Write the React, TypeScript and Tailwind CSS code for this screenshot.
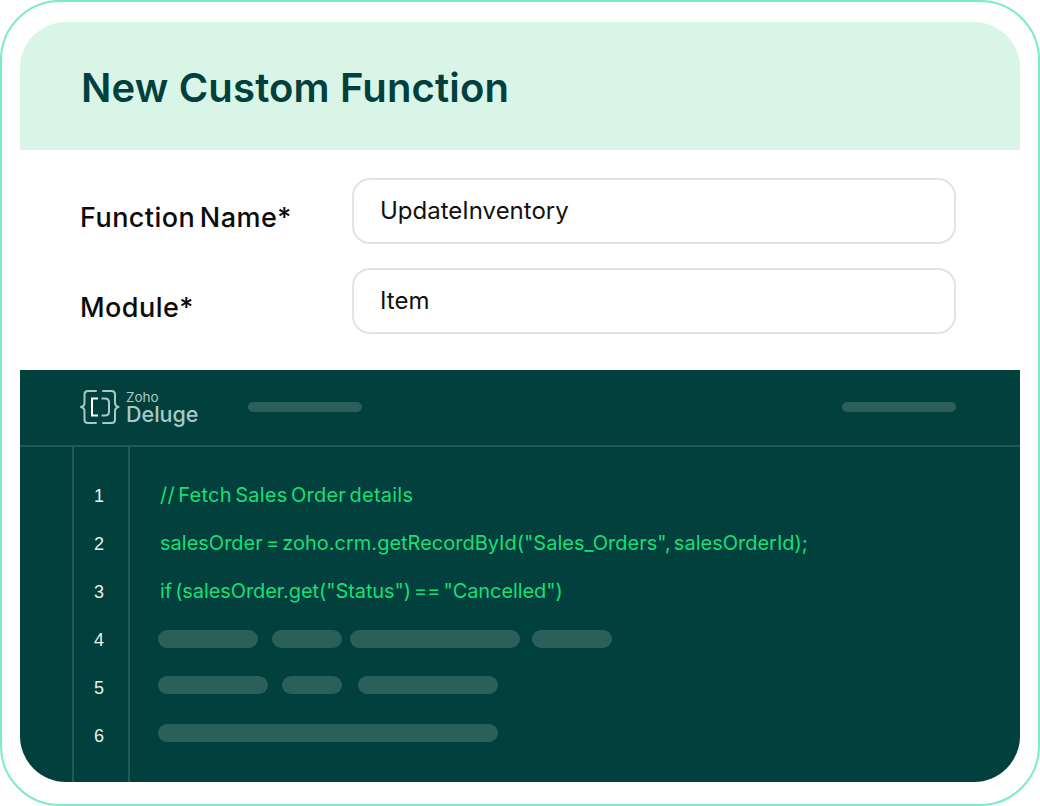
import React from 'react';

const sans = 'font-["Inter",sans-serif]';

// widths of the placeholder bars on the unreadable code lines
const skeletonLines: { n: number; row: string; bars: { w: string; gap: string }[] }[] = [
  {
    n: 4,
    row: '-mt-[1px]',
    bars: [
      { w: 'w-[100px]', gap: 'ml-0' },
      { w: 'w-[70px]', gap: 'ml-[14px]' },
      { w: 'w-[170px]', gap: 'ml-[8px]' },
      { w: 'w-[80px]', gap: 'ml-[12px]' },
    ],
  },
  {
    n: 5,
    row: '-mt-[2px]',
    bars: [
      { w: 'w-[110px]', gap: 'ml-0' },
      { w: 'w-[60px]', gap: 'ml-[14px]' },
      { w: 'w-[140px]', gap: 'ml-[16px]' },
    ],
  },
  { n: 6, row: 'mt-0', bars: [{ w: 'w-[340px]', gap: 'ml-0' }] },
];

const codeLines = [
  { text: '// Fetch Sales Order details', track: 'tracking-[0.25px]' },
  { text: 'salesOrder = zoho.crm.getRecordById("Sales_Orders", salesOrderId);', track: 'tracking-[0px]' },
  { text: 'if (salesOrder.get("Status") == "Cancelled")', track: 'tracking-[-0.08px]' },
];

function DelugeLogo() {
  return (
    <svg width="40" height="36" viewBox="0 0 40 36" fill="none" className="shrink-0 -mt-[1px]">
      <g stroke="#a9c9c4" strokeWidth="2" strokeLinecap="round" strokeLinejoin="round">
        <path d="M16 2H8C5.8 2 4.5 3.5 4.5 5.5V14C4.5 16 3 17.5 1 18C3 18.5 4.5 20 4.5 22V30.5C4.5 32.5 5.8 34 8 34H16" />
        <path d="M23 2H31.5C33.7 2 35 3.5 35 5.5V14C35 16 36.5 17.5 38.5 18C36.5 18.5 35 20 35 22V30.5C35 32.5 33.7 34 31.5 34H23" />
      </g>
      <path d="M18 9.5H12V26.5H18" stroke="#ffffff" strokeWidth="2" />
      <path d="M21.5 9.5H25C27.5 9.5 29 11 29 13.5V22.5C29 25 27.5 26.5 25 26.5H21.5" stroke="#a9c9c4" strokeWidth="2" />
    </svg>
  );
}

function Field({ label, value }: { label: string; value: string }) {
  return (
    <div className="flex items-center">
      <div className="w-[272px] text-[27px] leading-[32px] font-[450] text-[#0b0b0b] tracking-[0.45px] [word-spacing:-3px] pt-[14px]">{label}</div>
      <div className="w-[604px] h-[66px] rounded-[18px] border-2 border-[#e3e3e3] pl-[26px] flex items-center text-[24px] text-[#111111] pb-[1px]">
        {value}
      </div>
    </div>
  );
}

export default function App() {
  return (
    <div className={`w-[1040px] h-[806px] bg-white rounded-[60px] border-2 border-[#7eeac6] pt-[20px] px-[18px] ${sans}`}>
      <div className="w-[1000px] h-[760px] flex flex-col">
        <div className="h-[128px] bg-[#d9f5e8] rounded-t-[46px] pl-[61px] flex items-center">
          <h1 className="text-[40px] font-semibold text-[#01403c] leading-none pt-[3px] tracking-[0.16px]">New Custom Function</h1>
        </div>

        <div className="h-[220px] pl-[60px] pt-[28px] flex flex-col gap-[24px]">
          <Field label="Function Name*" value="UpdateInventory" />
          <Field label="Module*" value="Item" />
        </div>

        <div className="flex-1 bg-[#01403c] rounded-b-[46px] overflow-hidden flex flex-col">
          <div className="h-[77px] shrink-0 border-b-2 border-[#235a55] pl-[60px] pr-[64px] flex items-center">
            <DelugeLogo />
            <div className="ml-[6px] w-[82px] flex flex-col text-[#a9c9c4]">
              <span className="text-[13.5px] leading-[13px] font-normal">Zoho</span>
              <span className="text-[21.5px] leading-[21px] font-medium">Deluge</span>
            </div>
            <div className="w-[114px] h-[10px] rounded-full bg-[#2a5f5a] ml-[40px] -mt-[1px]" />
            <div className="w-[114px] h-[10px] rounded-full bg-[#2a5f5a] ml-auto -mt-[1px]" />
          </div>

          <div className="flex-1 flex">
            <div className="w-[54px] border-r-2 border-[#235a55]" />
            <div className="w-[56px] border-r-2 border-[#235a55] pt-[25px] pr-[4px] flex flex-col items-center">
              {[1, 2, 3, 4, 5, 6].map((n) => (
                <div key={n} className='h-[48px] flex items-center justify-center text-[18px] text-[#e6f2f0] font-["Liberation_Sans",sans-serif]'>
                  {n}
                </div>
              ))}
            </div>
            <div className="flex-1 pt-[25px] pl-[28px]">
              {codeLines.map((line) => (
                <div key={line.text} className={`h-[48px] flex items-center text-[20px] text-[#17df76] pl-[2px] pb-[3px] [word-spacing:-2.5px] ${line.track}`}>
                  {line.text}
                </div>
              ))}
              {skeletonLines.map((line) => (
                <div key={line.n} className={`h-[48px] flex items-center ${line.row}`}>
                  {line.bars.map((bar, i) => (
                    <div key={i} className={`h-[18px] rounded-full bg-[#2a5f5a] ${bar.w} ${bar.gap}`} />
                  ))}
                </div>
              ))}
            </div>
          </div>
        </div>
      </div>
    </div>
  );
}
